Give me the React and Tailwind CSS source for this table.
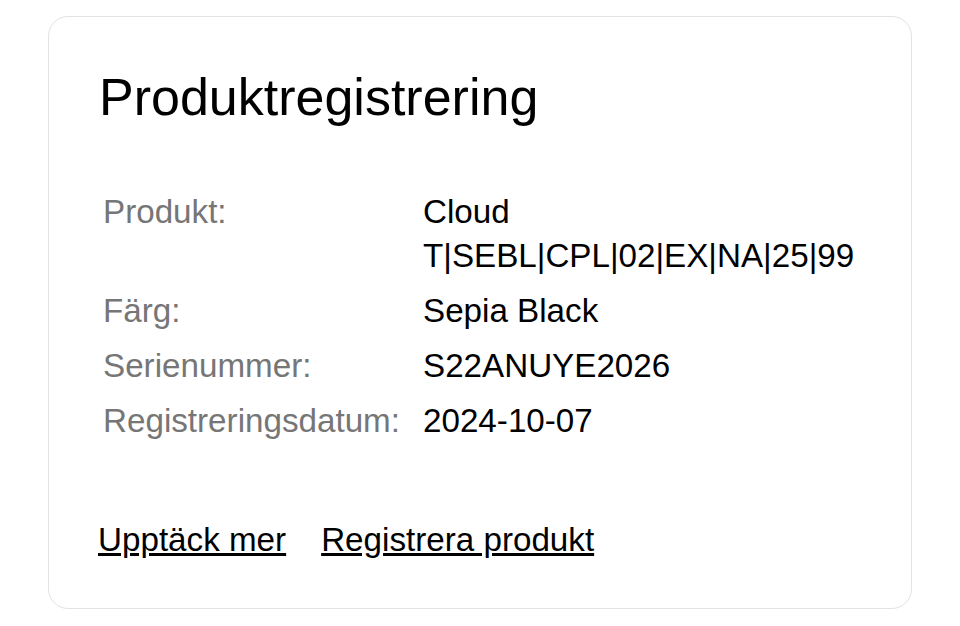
export default function App() {
  const rows = [
    { label: 'Produkt:', value: ['Cloud', 'T|SEBL|CPL|02|EX|NA|25|99'] },
    { label: 'Färg:', value: ['Sepia Black'] },
    { label: 'Serienummer:', value: ['S22ANUYE2026'] },
    { label: 'Registreringsdatum:', value: ['2024-10-07'] },
  ]

  return (
    <div className="min-h-screen bg-white px-[48px] pt-[16px] font-['Liberation_Sans',Arial,sans-serif]">
      <div className="h-[593px] rounded-[20px] border border-[#e3e3e3] bg-white pl-[50px] pr-[40px] pt-[49px] flex flex-col">
        <h1 className="text-[52px] leading-[62px] text-black">Produktregistrering</h1>
        <table className="mt-[56px] text-[33.2px] leading-[44px]">
          <tbody>
            {rows.map((row) => (
              <tr key={row.label} className="align-top">
                <td className="w-[320px] py-[5.5px] pl-[4px] text-[#767676]">{row.label}</td>
                <td className="py-[5.5px] pl-[4px] text-black">
                  {row.value.map((line) => (
                    <div key={line}>{line}</div>
                  ))}
                </td>
              </tr>
            ))}
          </tbody>
        </table>
        <div className="mt-auto mb-[46px] -ml-[1px] flex gap-[35px] text-[33.2px] leading-[45px] text-black">
          <a href="#" className="underline">Upptäck mer</a>
          <a href="#" className="underline">Registrera produkt</a>
        </div>
      </div>
    </div>
  )
}
